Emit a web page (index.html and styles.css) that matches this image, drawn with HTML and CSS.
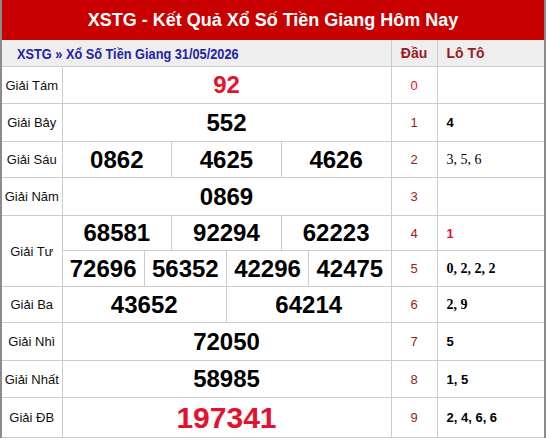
FILE: index.html
```html
<!DOCTYPE html>
<html lang="vi">
<head>
<meta charset="utf-8">
<title>XSTG</title>
<link rel="stylesheet" href="styles.css">
</head>
<body>
<div class="box">
  <h1 class="title">XSTG - Kết Quả Xổ Số Tiền Giang Hôm Nay</h1>
  <table class="kq">
    <colgroup>
      <col class="c-label">
      <col class="c-sub"><col class="c-sub"><col class="c-sub"><col class="c-sub">
      <col class="c-sub"><col class="c-sub"><col class="c-sub"><col class="c-sub">
      <col class="c-sub"><col class="c-sub"><col class="c-sub"><col class="c-sub">
      <col class="c-dau">
      <col class="c-loto">
    </colgroup>
    <thead>
      <tr class="head">
        <th colspan="13" class="crumb"><span>XSTG » Xổ Số Tiền Giang 31/05/2026</span></th>
        <th class="h-dau">Đầu</th>
        <th class="h-loto">Lô Tô</th>
      </tr>
    </thead>
    <tbody>
      <tr class="r1">
        <td class="lbl">Giải Tám</td>
        <td colspan="12" class="num red">92</td>
        <td class="dau hot">0</td>
        <td class="loto"></td>
      </tr>
      <tr class="r2">
        <td class="lbl">Giải Bảy</td>
        <td colspan="12" class="num">552</td>
        <td class="dau">1</td>
        <td class="loto">4</td>
      </tr>
      <tr class="r3">
        <td class="lbl">Giải Sáu</td>
        <td colspan="4" class="num">0862</td>
        <td colspan="4" class="num">4625</td>
        <td colspan="4" class="num">4626</td>
        <td class="dau">2</td>
        <td class="loto serif">3, 5, 6</td>
      </tr>
      <tr class="r4">
        <td class="lbl">Giải Năm</td>
        <td colspan="12" class="num">0869</td>
        <td class="dau">3</td>
        <td class="loto"></td>
      </tr>
      <tr class="r5">
        <td class="lbl" rowspan="2">Giải Tư</td>
        <td colspan="4" class="num">68581</td>
        <td colspan="4" class="num">92294</td>
        <td colspan="4" class="num">62223</td>
        <td class="dau">4</td>
        <td class="loto hotnum">1</td>
      </tr>
      <tr class="r6">
        <td colspan="3" class="num">72696</td>
        <td colspan="3" class="num">56352</td>
        <td colspan="3" class="num">42296</td>
        <td colspan="3" class="num">42475</td>
        <td class="dau">5</td>
        <td class="loto serif bolder">0, 2, 2, 2</td>
      </tr>
      <tr class="r7">
        <td class="lbl">Giải Ba</td>
        <td colspan="6" class="num">43652</td>
        <td colspan="6" class="num">64214</td>
        <td class="dau">6</td>
        <td class="loto serif bolder">2, 9</td>
      </tr>
      <tr class="r8">
        <td class="lbl">Giải Nhì</td>
        <td colspan="12" class="num">72050</td>
        <td class="dau">7</td>
        <td class="loto">5</td>
      </tr>
      <tr class="r9">
        <td class="lbl">Giải Nhất</td>
        <td colspan="12" class="num">58985</td>
        <td class="dau">8</td>
        <td class="loto">1, 5</td>
      </tr>
      <tr class="r10">
        <td class="lbl">Giải ĐB</td>
        <td colspan="12" class="num red big">197341</td>
        <td class="dau">9</td>
        <td class="loto">2, 4, 6, 6</td>
      </tr>
    </tbody>
  </table>
</div>
</body>
</html>
```

FILE: styles.css
```css
html, body {
  margin: 0;
  padding: 0;
  background: #fff;
}

body {
  font-family: "Liberation Sans", Arial, sans-serif;
  color: #000;
}

.box {
  width: 542px;
  border-left: 2px solid #8c8c8c;
  border-right: 2px solid #8c8c8c;
}

.title {
  margin: 0;
  height: 40px;
  line-height: 40px;
  background: #c80000;
  color: #fff;
  font-size: 18px;
  font-weight: bold;
  text-align: center;
}

.kq {
  width: 542px;
  table-layout: fixed;
  border-collapse: collapse;
}

.c-label { width: 60px; }
.c-sub { width: 27.4167px; }
.c-dau { width: 46px; }
.c-loto { width: 107px; }

.kq th,
.kq td {
  border: 1px solid #cccccc;
  padding: 0;
}

.kq tr > :first-child { border-left: none; }
.kq tr > :last-child { border-right: none; }
.kq thead th { border-top: none; }

.head th {
  height: 26px;
  background: #eeeeee;
  font-size: 14px;
  font-weight: bold;
}

.crumb {
  text-align: left;
  padding-left: 15px !important;
  color: #2323a8;
  white-space: nowrap;
}

.crumb span {
  display: inline-block;
  font-size: 15px;
  transform: scaleX(0.85);
  transform-origin: left center;
}

.h-dau,
.h-loto {
  color: #9b1b25;
}

.h-dau { text-align: center; }
.h-loto { text-align: left; padding-left: 9px !important; }

.lbl {
  font-size: 13px;
  text-align: center;
  color: #111;
}

.num {
  text-align: center;
  font-size: 24px;
  font-weight: bold;
  color: #000;
}

.num.red { color: #e4122f; }
.num.big { font-size: 30px; }

.dau {
  text-align: center;
  font-size: 13px;
  color: #9b1b25;
}

.dau.hot { color: #e4122f; }

.loto {
  padding-left: 9px !important;
  font-size: 13px;
  font-weight: bold;
  color: #000;
}

.loto.serif {
  font-family: "Liberation Serif", "Times New Roman", serif;
  font-weight: normal;
  font-size: 14px;
}

.loto.serif.bolder { font-weight: bold; }

.loto.hotnum { color: #e4122f; }

.r1 td { height: 36px; }
.r2 td { height: 37px; }
.r3 td { height: 35px; }
.r4 td { height: 37px; }
.r5 td { height: 34px; }
.r6 td { height: 35px; }
.r7 td { height: 35px; }
.r8 td { height: 37px; }
.r9 td { height: 36px; }
.r10 td { height: 39px; }
```
